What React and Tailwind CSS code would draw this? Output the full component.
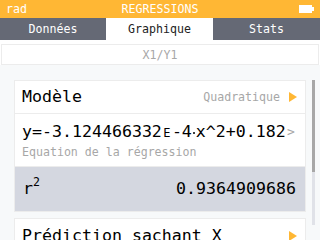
import React from "react";

const mono = { fontFamily: '"DejaVu Sans Mono", "Liberation Mono", monospace' };

function Arrow() {
  return (
    <svg width="8" height="10" viewBox="0 0 8 10" className="shrink-0">
      <polygon points="0,0 8,5 0,10" fill="#FFB734" />
    </svg>
  );
}

export default function App() {
  return (
    <div
      className="w-[320px] h-[240px] overflow-hidden bg-[#F7F9FA] flex flex-col"
      style={mono}
    >
      {/* Header */}
      <div className="h-[18px] bg-[#FFB734] grid grid-cols-[1fr_auto_1fr] items-center text-white text-[11.6px] leading-[14px] px-[6px] shrink-0">
        <span>rad</span>
        <span>REGRESSIONS</span>
        <div className="flex justify-end items-center">
          <div className="flex items-center">
            <div className="w-[13px] h-[8px] border border-white bg-white" />
            <div className="w-[2px] h-[4px] bg-white" />
          </div>
        </div>
      </div>

      {/* Tabs */}
      <div className="h-[22px] grid grid-cols-[106px_107px_107px] text-[11.6px] leading-[14px] shrink-0">
        <div className="bg-[#656975] text-white flex items-center justify-center">Données</div>
        <div className="bg-white text-[#222] flex items-center justify-center">Graphique</div>
        <div className="bg-[#656975] text-white flex items-center justify-center">Stats</div>
      </div>

      {/* Banner */}
      <div className="bg-white pt-[4px] px-[1px] shrink-0">
        <div className="h-[21px] border border-[#ECECEC] bg-white flex items-center justify-center text-[11.6px] leading-[14px] text-[#A7A7A7]">
          X1/Y1
        </div>
      </div>

      {/* Content */}
      <div className="flex pt-[15px]">
        <div className="ml-[14px] w-[292px] flex flex-col gap-[6px]">
          <div className="border border-[#ECECEC] bg-white flex flex-col">
            <div className="h-[33px] border-b border-[#ECECEC] flex items-center justify-between pl-[7px] pr-[8px]">
              <span className="text-[16.6px] leading-[18px] text-black">Modèle</span>
              <div className="flex items-center gap-[9px]">
                <span className="text-[11.6px] leading-[14px] text-[#A7A7A7]">Quadratique</span>
                <Arrow />
              </div>
            </div>
            <div className="h-[53px] border-b border-[#ECECEC] flex flex-col pl-[7px] pt-[9px]">
              <div className="flex items-center">
                <div className="w-[265px] overflow-hidden whitespace-nowrap flex items-center h-[18px] text-[16.6px] leading-[18px] text-black">
                  <span>y=-3.124466332</span>
                  <span className="inline-block w-[10px] text-center text-[12px] leading-[18px] pt-[2px]">E</span>
                  <span>-4</span>
                  <span className="w-[4px] h-[18px] flex items-center justify-center shrink-0">
                    <span className="block w-[2px] h-[2px] bg-black rounded-full mt-[2px]" />
                  </span>
                  <span>x^2+0.182</span>
                </div>
                <span className="text-[13px] leading-[18px] text-[#A7A7A7]">&gt;</span>
              </div>
              <span className="mt-[4px] text-[11.6px] leading-[14px] text-[#A7A7A7]">
                Equation de la régression
              </span>
            </div>
            <div className="h-[44px] bg-[#D4D7E0] flex items-center justify-between pl-[8px] pr-[9px]">
              <span className="text-[16.6px] leading-[18px] text-black flex items-baseline">
                <span>r</span>
                <span className="text-[11.6px] relative -top-[8px]">2</span>
              </span>
              <span className="text-[16.6px] leading-[18px] text-black">0.9364909686</span>
            </div>
          </div>
          <div className="border border-[#ECECEC] bg-white">
            <div className="h-[33px] flex items-center justify-between pl-[7px] pr-[8px]">
              <span className="text-[16.6px] leading-[18px] text-black">Prédiction sachant X</span>
              <Arrow />
            </div>
          </div>
        </div>
        <div className="ml-[6px] w-[3px] h-[145px] bg-[#E0E2E8] flex flex-col">
          <div className="h-[92px] bg-[#A7A7A7]" />
        </div>
      </div>
    </div>
  );
}
